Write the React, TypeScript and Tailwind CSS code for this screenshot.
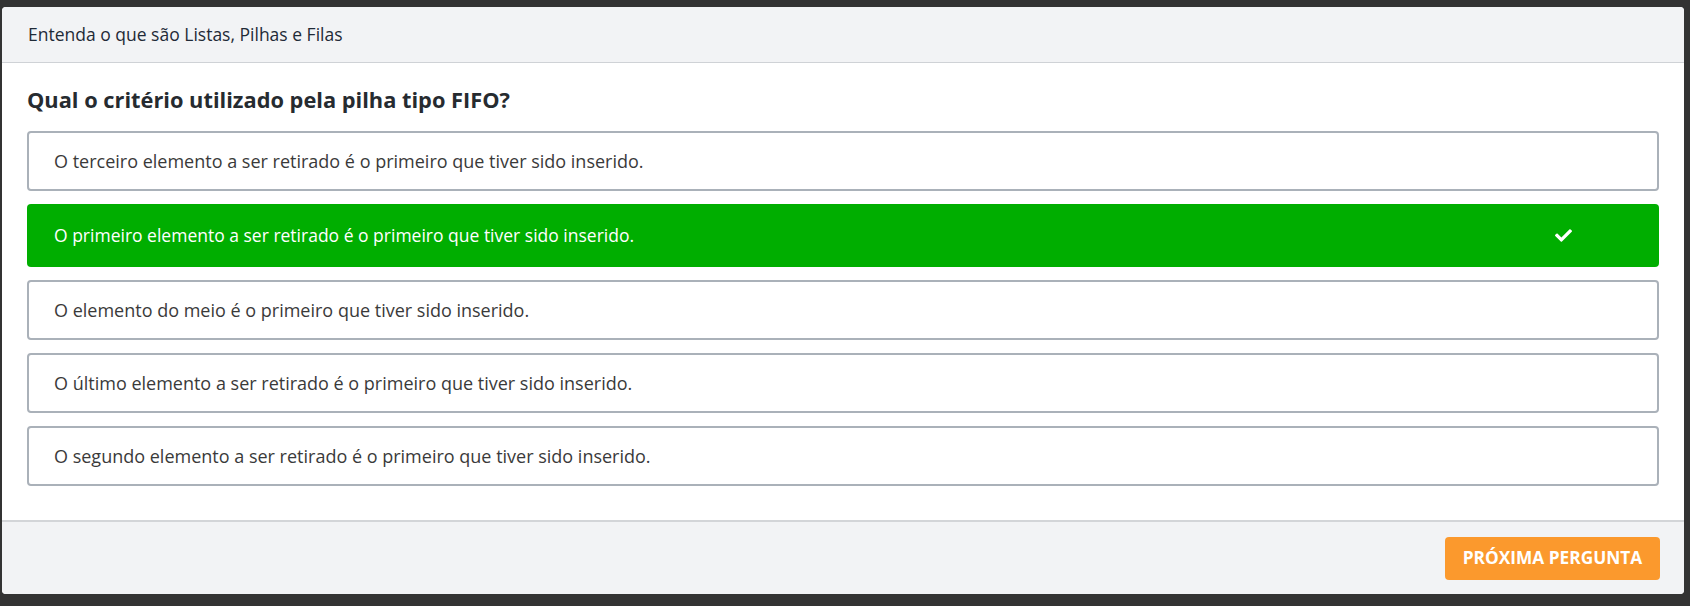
import { FaCheck } from "react-icons/fa";

const OPTIONS = [
  { text: "O terceiro elemento a ser retirado é o primeiro que tiver sido inserido.", correct: false },
  { text: "O primeiro elemento a ser retirado é o primeiro que tiver sido inserido.", correct: true },
  { text: "O elemento do meio é o primeiro que tiver sido inserido.", correct: false },
  { text: "O último elemento a ser retirado é o primeiro que tiver sido inserido.", correct: false },
  { text: "O segundo elemento a ser retirado é o primeiro que tiver sido inserido.", correct: false },
];

function Option({ text, correct }: { text: string; correct: boolean }) {
  if (correct) {
    return (
      <div className="h-[63px] rounded-[4px] bg-[#00ae00] text-white flex items-center pl-[27px] pr-[87px] justify-between">
        <span className="text-[17.5px] font-medium">{text}</span>
        <FaCheck className="w-[17px] h-[17px]" />
      </div>
    );
  }
  return (
    <div className="h-[60px] rounded-[4px] border-2 border-[#aab1b9] bg-white flex items-center pl-[25px] text-[#3a3a3a]">
      <span className="text-[18px]">{text}</span>
    </div>
  );
}

export default function App() {
  return (
    <div className="w-[1690px] h-[606px] bg-[#333333] pl-[2px] pt-[7px] font-['Open_Sans',sans-serif]">
      <div className="w-[1682px] h-[587px] bg-white rounded-[4px] overflow-hidden flex flex-col">
        {/* header */}
        <div className="h-[56px] bg-[#f2f3f5] border-b border-[#cfd2d6] flex items-center px-[26px]">
          <span className="text-[17.5px] text-[#1f2a37]">Entenda o que são Listas, Pilhas e Filas</span>
        </div>

        {/* body */}
        <div className="flex-1 px-[25px] pt-[22px]">
          <h2 className="text-[21.8px] leading-[30px] font-bold text-[#262b30] mb-[16px]">
            Qual o critério utilizado pela pilha tipo FIFO?
          </h2>
          <div className="flex flex-col gap-[13px]">
            {OPTIONS.map((o) => (
              <Option key={o.text} text={o.text} correct={o.correct} />
            ))}
          </div>
        </div>

        {/* footer */}
        <div className="h-[74px] bg-[#f2f3f5] border-t-2 border-[#d3d5d8] flex items-center justify-end pr-[24px]">
          <button className="h-[43px] w-[215px] rounded-[4px] bg-[#fb992d] text-white text-[17.3px] font-bold uppercase">
            Próxima Pergunta
          </button>
        </div>
      </div>
    </div>
  );
}
